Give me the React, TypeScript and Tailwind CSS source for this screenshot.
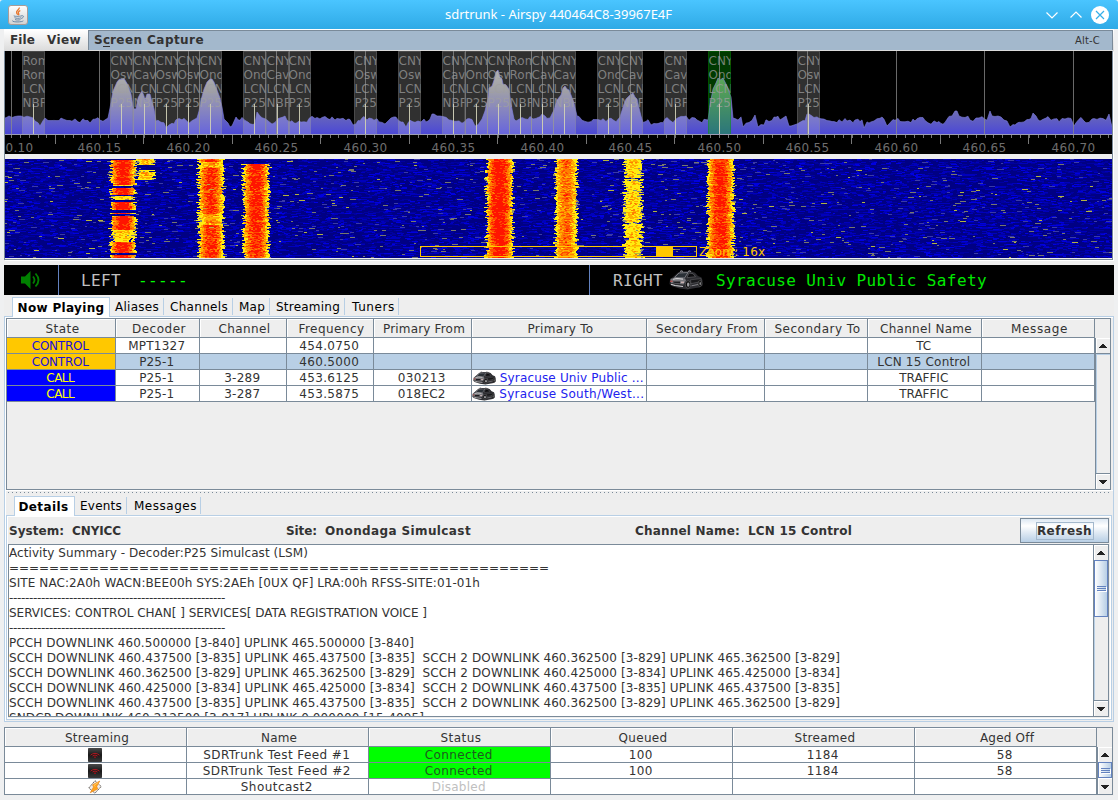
import { useLayoutEffect, useRef, useState, type ReactNode } from "react";

/* Text run whose tracking is adjusted so that it spans a fixed number of pixels. */
function T({ w, className = "", children }: { w?: number; className?: string; children: string }) {
  const ref = useRef<HTMLSpanElement>(null);
  const [ls, setLs] = useState(0);
  useLayoutEffect(() => {
    if (ref.current && w) {
      ref.current.style.letterSpacing = "0px";
      const gap = (w - ref.current.getBoundingClientRect().width) / children.length;
      ref.current.style.letterSpacing = gap + "px";
      setLs(gap);
    }
  }, [w, children]);
  return (
    <span ref={ref} className={"inline-block whitespace-pre " + className} style={{ letterSpacing: ls }}>
      {children}
    </span>
  );
}

function rng(seed: number) {
  let s = seed;
  return () => {
    s = (s * 1664525 + 1013904223) % 4294967296;
    return s / 4294967296;
  };
}

/* ---------- spectrum ---------- */
const CHANNELS: [number, string, string, string][] = [
  [22, "Rom", "Rom", "NBF"], [110, "CNY", "Osw", "P25"], [133, "CNY", "Cav", "NBF"], [155, "CNY", "Osw", "P25"],
  [177, "CNY", "Osw", "P25"], [199, "CNY", "Ono", "P25"], [243, "CNY", "Ono", "P25"], [266, "CNY", "Cav", "NBF"],
  [288, "CNY", "Ono", "P25"], [354, "CNY", "Osw", "P25"], [398, "CNY", "Osw", "P25"], [442, "CNY", "Cav", "NBF"],
  [465, "CNY", "Ono", "P25"], [487, "CNY", "Osw", "P25"], [509, "Rom", "Rom", "NBF"], [531, "CNY", "Cav", "NBF"],
  [553, "CNY", "Cav", "NBF"], [597, "CNY", "Ono", "P25"], [620, "CNY", "Cav", "NBF"], [664, "CNY", "Cav", "NBF"],
  [708, "CNY", "Ono", "P25"], [797, "CNY", "Osw", "P25"],
];

const PEAKS: [number, number][][] = [
  [[108, 118], [110, 108], [113, 91], [117, 82], [119, 79.5], [122, 79], [123, 79], [124, 78.5], [125, 80], [128, 85], [131, 94], [133, 106], [134, 109], [136, 109], [138, 98], [140, 94], [142, 91], [144, 96], [145, 100], [147, 94], [150, 94], [152, 102], [154, 109], [156, 121]],
  [[197, 118], [199, 111], [201, 100], [204, 89], [207, 82], [210, 79], [212, 79], [214, 82], [217, 90], [220, 98], [222, 107], [224, 119], [228, 123], [230, 127], [232, 126], [236, 117]],
  [[482, 119], [485, 111], [488, 98], [489, 88], [492, 86], [494, 80], [496, 72], [498, 70], [500, 77], [502, 79], [503, 84], [506, 85], [509, 89], [511, 104], [514, 119]],
  [[550, 118], [554, 110], [557, 100], [561, 95], [563, 88], [565, 86], [567, 89], [569, 90], [571, 95], [574, 103], [577, 116]],
  [[620, 117], [624, 104], [626, 99], [630, 95], [633, 93], [635, 97], [637, 99], [639, 108], [641, 116]],
  [[708, 120], [710, 105], [713, 89], [716, 83], [718, 78], [720, 80], [723, 78], [726, 84], [728, 89], [731, 97], [733, 118]],
];
const BUMPS: [number, number][] = [[433, 114], [542, 114], [257, 112], [956, 111], [990, 111], [1034, 113], [755, 115], [808, 114], [1109, 114], [9, 116]];
const DIPS: [number, number][] = [[40, 126], [167, 128], [352, 125], [405, 127], [476, 126], [650, 125], [744, 127], [757, 127], [790, 126], [865, 128], [887, 126], [1011, 127], [1073, 126]];

function tracePath() {
  const r = rng(77);
  const pts: [number, number][] = [[5, 118]];
  let x = 7;
  let y = 118;
  while (x < 1111) {
    const pk = PEAKS.find((p) => x >= p[0][0] - 2 && x <= p[p.length - 1][0]);
    if (pk) {
      pts.push(...pk);
      x = pk[pk.length - 1][0] + 2;
      continue;
    }
    const b = BUMPS.find((q) => Math.abs(q[0] - x) < 1.6) || DIPS.find((q) => Math.abs(q[0] - x) < 1.6);
    y = b ? b[1] : Math.max(116, Math.min(125, y * 0.6 + 119.5 * 0.4 + (r() - 0.5) * 6));
    pts.push([x, y]);
    x += 2 + Math.round(r());
  }
  pts.push([1112, 127]);
  return pts.map((p) => p[0] + " " + p[1].toFixed(1)).join("L");
}
const TRACE = tracePath();

function Spectrum() {
  const lines = Array.from({ length: 13 }, (_, i) => Math.round(10.6 + i * 88.5) + 0.5);
  const ticks = Array.from({ length: 125 }, (_, i) => i);
  return (
    <svg width="1107" height="103" viewBox="5 51 1107 103" className="block bg-black" fontFamily="DejaVu Sans, sans-serif" fontSize="12">
      <defs>
        <linearGradient id="pw" gradientUnits="userSpaceOnUse" x1="0" y1="70" x2="0" y2="134">
          <stop offset="0" stopColor="#a4a4a4" />
          <stop offset="0.3" stopColor="#909095" />
          <stop offset="1" stopColor="#4b48d6" />
        </linearGradient>
        <clipPath id="under"><path d={"M5 134L" + TRACE + "L1112 134Z"} /></clipPath>
      </defs>
      {CHANNELS.map((c) => (
        <rect key={c[0]} x={c[0]} y="51" width="23" height="83" fill={c[0] === 708 ? "#003a00" : "#303030"} />
      ))}
      <path d={"M5 134L" + TRACE + "L1112 134Z"} fill="url(#pw)" />
      <g clipPath="url(#under)">
        {CHANNELS.map((c) => (
          <rect key={c[0]} x={c[0]} y="51" width="23" height="83" fill={c[0] === 708 ? "#00b400" : "#ffffff"} opacity={c[0] === 708 ? 0.42 : 0.16} />
        ))}
      </g>
      <path d={"M" + TRACE} fill="none" stroke="#7f7fe0" strokeWidth="1" opacity="0.6" />
      {CHANNELS.map((c) => (
        <path key={c[0]} d={`M${c[0] + 0.5} 134V51.5H${c[0] + 22.5}V134`} fill="none" stroke={c[0] === 708 ? "#008a00" : "#888"} opacity="0.3" />
      ))}
      {CHANNELS.slice(0, 21).filter((c, i) => CHANNELS[i + 1][0] - c[0] < 24).map((c) => (
        <path key={c[0]} d={`M${c[0] + 22.5 + (c[0] % 2 ? 0 : 1)} 51V134`} stroke="#999" opacity="0.5" />
      ))}
      {lines.map((x) => (
        <path key={x} d={`M${x} 51V134`} stroke="#8c8c8c" opacity="0.75" />
      ))}
      {CHANNELS.map((c) => (
        <svg key={c[0]} x={c[0]} y="51" width="22.5" height="83" fill="#a0a0a0" fillOpacity="0.72">
          <text x="0.5" y="14">{c[1]}</text>
          <text x="0.5" y="28">{c[2]}</text>
          <text x="0.5" y="42">LCN</text>
          <text x="0.5" y="56">{c[3]}</text>
        </svg>
      ))}
      {CHANNELS.map((c) => (
        <path key={c[0]} d={`M${c[0] + 11.5} 104V134`} stroke="#d2d2b8" opacity="0.9" />
      ))}
      <path d="M5 134.5H1112" stroke="#9c9cb4" />
      {ticks.map((i) => {
        const x = Math.round(11 + i * 8.85) + 0.5;
        return <path key={i} d={`M${x} 135V138`} stroke="#777" />;
      })}
      {lines.map((x) => (
        <path key={x} d={`M${x + 44} 135V144`} stroke="#777" />
      ))}
      <g fill="#6e6e6e" textAnchor="middle">
        {lines.map((x, i) => (
          <text key={x} x={x} y="152" letterSpacing="0.35">{i ? (460.1 + i * 0.05).toFixed(2) : "460.10"}</text>
        ))}
      </g>
    </svg>
  );
}

/* ---------- waterfall ---------- */
type Band = { c: number; h: number; heat: (y: number) => number };
const inR = (y: number, rs: number[][]) => rs.some((q) => y >= q[0] && y <= q[1]);
const BANDS: Band[] = [
  { c: 123, h: 12.5, heat: (y) => (inR(y, [[1, 25], [29, 35], [43, 50], [54, 54], [57, 70], [83, 93], [96, 98]]) ? 0.96 : inR(y, [[26, 26], [37, 40], [71, 82]]) ? 0.4 : 0) },
  { c: 146, h: 9, heat: (y) => (inR(y, [[0, 5], [13, 19]]) ? 0.5 : inR(y, [[11, 12], [20, 20]]) ? 0.3 : 0) },
  { c: 211, h: 12.5, heat: (y) => (inR(y, [[3, 8], [55, 65]]) ? 0.6 : 0.86) },
  { c: 256, h: 12.5, heat: (y) => (y < 5 ? 0 : 0.88) },
  { c: 499.5, h: 13, heat: () => 0.96 },
  { c: 566, h: 11, heat: () => 0.68 },
  { c: 633, h: 9.5, heat: (y) => (inR(y, [[19, 21], [31, 32], [63, 65], [79, 80]]) ? 0.24 : 0.43) },
  { c: 720.5, h: 13, heat: () => 0.88 },
];
function waterfall() {
  const r = rng(4242);
  const out: Record<string, string> = {};
  const put = (k: string, x: number, y: number, w: number) => {
    out[k] = (out[k] || "") + `M${x} ${y}h${w}v1h-${w}z`;
  };
  for (let y = 0; y < 99; y++) {
    let x = 5;
    while (x < 1112) {
      const w = 2 + Math.floor(r() * 5);
      const v = r();
      if (v > 0.985) put("#77776e", x, y, w);
      else if (v > 0.982) put("#b4b440", x, y, w);
      else if (v > 0.965) put("#3a3aa8", x, y, w);
      else if (v > 0.89) put("#0000e0", x, y, w);
      else if (v > 0.72) put("#0000bc", x, y, w);
      else if (v > 0.56) put("#0000a0", x, y, w);
      x += w;
    }
    for (const b of BANDS) {
      const heat = b.heat(y);
      if (!heat) continue;
      const left = b.c - b.h + (r() - 0.5) * 5;
      const right = b.c + b.h + (r() - 0.5) * 5;
      const row = (r() - 0.5) * 0.18;
      for (let px = left; px < right; px += 2) {
        const d = Math.abs(px + 1 - b.c) / b.h;
        const e = heat * (1.17 - d * d * 0.8) + (r() - 0.5) * 0.36 + row;
        const k = e > 0.97 ? "#ff1400" : e > 0.82 ? "#ff4a00" : e > 0.66 ? "#ff7e00" : e > 0.5 ? "#ffae00" : e > 0.22 ? "#ffec10" : e > 0.14 ? "#8a8a70" : "";
        if (k) put(k, Math.round(px), y, 2);
      }
    }
  }
  return Object.entries(out);
}
const FALL = waterfall();

function Waterfall() {
  return (
    <svg width="1107" height="99" viewBox="5 0 1107 99" className="block bg-[#000084]">
      <g shapeRendering="crispEdges">
        {FALL.map(([k, d]) => (
          <path key={k} d={d} fill={k} />
        ))}
      </g>
      <rect x="420.5" y="87.5" width="276" height="10" fill="none" stroke="#ffc800" />
      <rect x="656" y="87" width="17" height="11" fill="#ffc800" />
      <text x="699" y="97" fill="#ffc800" fontSize="12" fontFamily="DejaVu Sans, sans-serif" letterSpacing="0.15">Zoom: 16x</text>
    </svg>
  );
}

/* ---------- icons ---------- */
function JavaIcon() {
  return (
    <svg width="20" height="20" viewBox="0 0 20 20">
      <defs>
        <linearGradient id="jv" x1="0" y1="0" x2="0" y2="1"><stop offset="0" stopColor="#fff" /><stop offset="1" stopColor="#d2d2d2" /></linearGradient>
      </defs>
      <rect x="0.5" y="0.5" width="19" height="19" rx="2.5" fill="url(#jv)" stroke="#a89c98" />
      <path d="M11.2 2.5c.8 2-3.4 3.2-2.6 5.300.3.8 1 1.400 1.300 2M12.300 5.500c-1.700 1-2.500 1.800-1.700 2.900.5.7.4 1.200-.2 1.800" fill="none" stroke="#e8762d" strokeWidth="1.300" />
      <path d="M6 10.700c-1.500.8 6 .9 8 0M6.500 12.700c1.500.8 5 .8 6.500.1M7 14.500c1.400.7 4 .7 5.500.1M13.700 10.800c2.600-.6 2.300 2-.6 2.700M4.500 15.700c-.8 1.500 9.500 1.700 10.800.1" fill="none" stroke="#5f7f9f" strokeWidth="0.900" />
    </svg>
  );
}

function Car({ small = false }: { small?: boolean }) {
  return (
    <svg width={small ? 23 : 34} height={small ? 14 : 20} viewBox="0 0 34 20" className="shrink-0">
      <path d="M1 9.500 4 7 9 2.500 12 1.200h10l4 1.500L29 6l3.500 1.500 1 3v5l-3 2-4 .5-8 1.500-8-1-8-2.500L.5 14z" fill="#2c2c30" />
      <path d="M11 1.500q1.500-1.500 3 0M19 1.500q1.500-1.500 3 0" stroke="#94949a" strokeWidth="1" fill="#777" />
      <path d="M5.500 7.500 10 3l9-.5-3.500 5.500z" fill="#2a3036" stroke="#8a8a90" strokeWidth="0.800" />
      <path d="M20 3l4 .7 2.500 3-8.500 1z" fill="#0c0c0e" stroke="#69696d" strokeWidth="0.600" />
      <path d="M1.500 8.800 8 7.700l8 .8 1 2-2.500 4L2 13z" fill="#77777c" />
      <path d="M4 9.300 8 8.500l6 .6M2 14.200l4 1.300 8 1" stroke="#d2d2d4" strokeWidth="1.100" fill="none" />
      <path d="M4 11.500h7v2l-6.500-.7z" fill="#1c1c1f" />
      <path d="M1.200 11.300h2.400" stroke="#b05050" strokeWidth="1.500" />
      <path d="M12 12.300h3" stroke="#c8b0b0" strokeWidth="1.500" />
      <path d="M21.500 9.800 32 8.600v3l-10 2z" fill="#18181a" stroke="#66666a" strokeWidth="0.500" />
      <path d="M22.500 15.800 29 14.500" stroke="#8d8d92" strokeWidth="0.900" />
      <ellipse cx="19" cy="14.500" rx="2.700" ry="3.900" fill="#0b0b0b" stroke="#707074" strokeWidth="0.600" />
      <ellipse cx="19.200" cy="14.700" rx="1.300" ry="2.100" fill="#9b9b9f" />
      <ellipse cx="31" cy="13.500" rx="1.900" ry="3" fill="#0b0b0b" stroke="#666" strokeWidth="0.600" />
      <ellipse cx="31.200" cy="13.500" rx="0.800" ry="1.500" fill="#8b8b8f" />
    </svg>
  );
}

function FeedIcon() {
  return (
    <svg width="14" height="14" viewBox="0 0 14 14" className="block">
      <defs>
        <linearGradient id="fd" x1="0" y1="0" x2="0" y2="1"><stop offset="0" stopColor="#4a4a4a" /><stop offset="0.5" stopColor="#181818" /><stop offset="1" stopColor="#3a3a3a" /></linearGradient>
      </defs>
      <rect width="14" height="14" rx="0.800" fill="url(#fd)" />
      <path d="M2.500 7.200Q7 3.500 11.500 7.200M4.500 8Q7 6 9.500 8" fill="none" stroke="#b01820" strokeWidth="1" />
      <path d="M7 7.500v1.800M6 9.500h2" stroke="#901018" strokeWidth="0.900" />
    </svg>
  );
}

function ShoutcastIcon() {
  return (
    <svg width="14" height="14" viewBox="0 0 14 14" className="block">
      <path d="M7 .7 13.200 6.500 7 13.200.8 8z" fill="#f1ede8" stroke="#6f6a66" strokeWidth="1" strokeDasharray="1.800 0.500" />
      <path d="M11.800 1 4.500 4.800 5.500 7l-3.300 5.800L9.800 9 8.800 6.500z" fill="#ffa31c" stroke="#e8821a" strokeWidth="0.600" />
      <path d="M10.200 2.500 6 5.300l1.200 1.300" fill="none" stroke="#ffd47a" strokeWidth="0.800" />
    </svg>
  );
}

function Arrow({ up = false }: { up?: boolean }) {
  return (
    <svg width="8" height="4" viewBox="0 0 8 4" shapeRendering="crispEdges" className="block">
      <path d={up ? "M3 0h2v1h1v1h1v1h1v1H0V3h1V2h1V1h1z" : "M0 0h8v1H7v1H6v1H5v1H3V3H2V2H1V1H0z"} fill="#222" />
    </svg>
  );
}

function Grip() {
  return (
    <div className="flex h-[5px] w-[9px] flex-col justify-between border-y border-[#6382bf] py-[1px] shadow-[1px_1px_0_#fff]">
      <div className="h-px bg-[#6382bf]" />
    </div>
  );
}

function ArrowBtn({ up = false, className = "" }: { up?: boolean; className?: string }) {
  return (
    <div className={"flex shrink-0 items-center justify-center border-l border-t border-white bg-[#eeeeee] pr-[2px] " + className}>
      <Arrow up={up} />
    </div>
  );
}

/* ---------- tables ---------- */
const LINE = "border-[#7a8a99]";

function Head({ w, children }: { w: number; children: string }) {
  return (
    <div className={"h-[19px] border-b border-r " + LINE}>
      <div className="flex h-[18px] items-center justify-center border-l border-t border-white bg-[#eeeeee] pl-[2px] pt-[2px]">
        <T w={w}>{children}</T>
      </div>
    </div>
  );
}

function Cell({ className = "bg-white", icon = false, children }: { className?: string; icon?: boolean; children?: ReactNode }) {
  return (
    <div className={"flex h-[16px] items-center justify-center overflow-hidden border-b border-r pr-[1.500px] leading-[15px] " + (icon ? "pt-0 " : "pt-[2px] ") + LINE + " " + className}>
      {children}
    </div>
  );
}

const HEADS: [string, number][] = [
  ["State", 34], ["Decoder", 54], ["Channel", 52], ["Frequency", 66], ["Primary From", 82],
  ["Primary To", 66], ["Secondary From", 102], ["Secondary To", 86], ["Channel Name", 92], ["Message", 57],
];

type Row = { state: string; dec: string; ch?: string; f: string; from?: string; to?: [string, number]; name: [string, number]; sel?: boolean };
const ROWS: Row[] = [
  { state: "CONTROL", dec: "MPT1327", f: "454.0750", name: ["TC", 15] },
  { state: "CONTROL", dec: "P25-1", f: "460.5000", name: ["LCN 15 Control", 93], sel: true },
  { state: "CALL", dec: "P25-1", ch: "3-289", f: "453.6125", from: "030213", to: ["Syracuse Univ Public ...", 144], name: ["TRAFFIC", 49] },
  { state: "CALL", dec: "P25-1", ch: "3-287", f: "453.5875", from: "018EC2", to: ["Syracuse South/West...", 145], name: ["TRAFFIC", 49] },
];

function NowPlayingTable() {
  return (
    <div className={"flex h-[172px] w-[1105px] border " + LINE}>
      <div className="w-[1088px]">
        <div className="grid grid-cols-[109px_84px_87px_87px_98px_175px_118px_103px_114px_113px]">
          {HEADS.map(([h, w]) => (
            <Head key={h} w={w}>{h}</Head>
          ))}
          {ROWS.map((r, i) => {
            const bg = r.sel ? "bg-[#b8cfe5]" : "bg-white";
            const ctl = r.state === "CONTROL";
            return (
              <div key={i} className="contents">
                <Cell className={ctl ? "bg-[#ffc800] text-[#1a10d8]" : "bg-[#0000ff] text-[#ffff00]"}>
                  <T w={ctl ? 57 : 28}>{r.state}</T>
                </Cell>
                <Cell className={bg}><T w={r.dec === "P25-1" ? 35 : 57}>{r.dec}</T></Cell>
                <Cell className={bg}>{r.ch && <T w={36}>{r.ch}</T>}</Cell>
                <Cell className={bg}><T w={60}>{r.f}</T></Cell>
                <Cell className={bg}>{r.from && <T w={48}>{r.from}</T>}</Cell>
                <Cell className={bg}>
                  {r.to && (
                    <div className="flex items-center gap-[4px] text-[#2222ee]">
                      <span className="pb-[2px]"><Car small /></span>
                      <T w={r.to[1]}>{r.to[0]}</T>
                    </div>
                  )}
                </Cell>
                <Cell className={bg} />
                <Cell className={bg} />
                <Cell className={bg}><T w={r.name[1]}>{r.name[0]}</T></Cell>
                <Cell className={bg} />
              </div>
            );
          })}
        </div>
      </div>
      <div className="flex w-[15px] flex-col pt-[19px]">
        <div className={"flex flex-1 flex-col border-l " + LINE}>
          <ArrowBtn up className="h-[15px]" />
          <div className="h-px bg-[#7a8a99]" />
          <div className="h-px bg-[#b8cfe5]" />
          <div className="flex-1 border-l border-[#b8cfe5] bg-[#eeeeee]" />
          <div className="h-px bg-[#7a8a99]" />
          <ArrowBtn className="h-[15px]" />
        </div>
      </div>
    </div>
  );
}

const FEEDS: [ReactNode, string, number, string, string, string][] = [
  [<FeedIcon />, "SDRTrunk Test Feed #1", 147, "Connected", "1184", "58"],
  [<FeedIcon />, "SDRTrunk Test Feed #2", 148, "Connected", "1184", "58"],
  [<ShoutcastIcon />, "Shoutcast2", 72, "Disabled", "", ""],
];

function StreamTable() {
  const heads: [string, number][] = [["Streaming", 64], ["Name", 36], ["Status", 41], ["Queued", 49], ["Streamed", 61], ["Aged Off", 54]];
  return (
    <div className={"flex h-[68px] w-[1109px] border border-b-0 " + LINE}>
      <div className="grid grid-cols-[182px_182px_182px_182px_182px_182px] content-start">
        {heads.map(([h, w]) => (
          <Head key={h} w={w}>{h}</Head>
        ))}
        {FEEDS.map(([icon, name, w, status, n, aged]) => (
          <div key={name} className="contents">
            <Cell icon>{icon}</Cell>
            <Cell><T w={w}>{name}</T></Cell>
            <Cell className={status === "Connected" ? "bg-[#00ff00] text-[#1f5a1f]" : "bg-white text-[#c0c0c0]"}>
              <T w={status === "Connected" ? 68 : 54}>{status}</T>
            </Cell>
            <Cell>{n && <T w={24}>100</T>}</Cell>
            <Cell>{n && <T w={32}>{n}</T>}</Cell>
            <Cell>{aged && <T w={16}>{aged}</T>}</Cell>
          </div>
        ))}
      </div>
      <div className={"mt-[19px] flex w-[15px] flex-col border-b border-l " + LINE}>
        <ArrowBtn up className="h-[15px]" />
        <div className="flex h-[16px] items-center justify-center border border-[#6382bf] bg-linear-to-r from-white to-[#b8cfe5]">
          <Grip />
        </div>
        <ArrowBtn className="h-[16px]" />
      </div>
    </div>
  );
}

/* ---------- tabs ---------- */
function Tabs({ first, firstClass, items, className }: { first: [string, number]; firstClass: string; items: [string, number, string][]; className: string }) {
  return (
    <div className={"flex items-end text-black " + className}>
      <div className={"z-10 -mb-px flex items-center justify-center border border-b-0 border-[#b8cfe5] bg-white pt-px font-bold " + firstClass}>
        <T w={first[1]}>{first[0]}</T>
      </div>
      {items.map(([t, w, c]) => (
        <div key={t} className={"mb-px flex h-[17px] items-center justify-end border-r border-[#b8cfe5] pt-[2px] " + c}>
          <T w={w}>{t}</T>
        </div>
      ))}
    </div>
  );
}

const LOG: [string, number][] = [
  ["Activity Summary - Decoder:P25 Simulcast (LSM)", 299],
  ["======================================================", 540],
  ["SITE NAC:2A0h WACN:BEE00h SYS:2AEh [0UX QF] LRA:00h RFSS-SITE:01-01h", 471],
  ["------------------------------------------------------", 216],
  ["SERVICES: CONTROL CHAN[ ] SERVICES[ DATA REGISTRATION VOICE ]", 418],
  ["------------------------------------------------------", 216],
  ["PCCH DOWNLINK 460.500000 [3-840] UPLINK 465.500000 [3-840]", 405],
  ["SCCH DOWNLINK 460.437500 [3-835] UPLINK 465.437500 [3-835]  SCCH 2 DOWNLINK 460.362500 [3-829] UPLINK 465.362500 [3-829]", 831],
  ["SCCH DOWNLINK 460.362500 [3-829] UPLINK 465.362500 [3-829]  SCCH 2 DOWNLINK 460.425000 [3-834] UPLINK 465.425000 [3-834]", 831],
  ["SCCH DOWNLINK 460.425000 [3-834] UPLINK 465.425000 [3-834]  SCCH 2 DOWNLINK 460.437500 [3-835] UPLINK 465.437500 [3-835]", 831],
  ["SCCH DOWNLINK 460.437500 [3-835] UPLINK 465.437500 [3-835]  SCCH 2 DOWNLINK 460.362500 [3-829] UPLINK 465.362500 [3-829]", 831],
  ["SNDCP DOWNLINK 460.212500 [3-817] UPLINK 0.000000 [15-4095]", 415],
];

export default function App() {
  return (
    <div className="h-[800px] w-[1118px] overflow-hidden bg-[#eff0f1] font-['DejaVu_Sans',sans-serif] text-[12px] leading-[15px] text-[#333333]">
      {/* title bar */}
      <div className="grid h-[29px] grid-cols-[1fr_auto_1fr] items-center rounded-t-[3px] bg-linear-to-b from-[#4ac5ff] to-[#2eaae6] pl-2 pr-[9px]">
        <JavaIcon />
        <T w={227} className="font-['Noto_Sans',sans-serif] text-[13px] text-white">sdrtrunk - Airspy 440464C8-39967E4F</T>
        <svg width="66" height="18" viewBox="0 0 66 18" className="justify-self-end" fill="none" stroke="#fff" strokeWidth="1.200">
          <path d="M3.500 6.500 9 12l5.500-5.500M27.500 11.500 33 6l5.500 5.500" />
          <circle cx="57" cy="9" r="9" fill="#fff" stroke="none" />
          <path d="m53 5 8 8m0-8-8 8" stroke="#35afe9" />
        </svg>
      </div>

      <div className="mx-[4px] bg-[#eeeeee]">
        {/* menu bar */}
        <div className="flex h-[22px] border-t border-white bg-linear-to-b from-white to-[#dadada] font-bold">
          <div className="flex w-[84px] items-center pb-px pl-[6px]">
            <T w={25}>File</T>
            <T w={34} className="ml-[12px]">View</T>
          </div>
          <div className="flex h-[20px] w-[1025px] items-center justify-between border border-b-0 border-[#7a8a99] bg-[#a3b8cc] pl-[5px] pr-[12px]">
            <span className="flex">
              <T w={9}>S</T>
              <T w={7} className="underline underline-offset-2">c</T>
              <T w={94}>reen Capture</T>
            </span>
            <T w={25} className="text-[10px] font-normal">Alt-C</T>
          </div>
        </div>

        {/* spectrum and waterfall */}
        <div className="h-[209px] w-[1109px] border-x border-b border-[#7a8a99] shadow-[1px_1px_0_#fff]">
          <Spectrum />
          <div className="h-[5px] bg-[#eeeeee]" />
          <Waterfall />
        </div>

        {/* audio channels */}
        <div className="mt-[5px] flex h-[30px] items-center bg-black font-['DejaVu_Sans_Mono',monospace] text-[16px] text-[#c0c0c0]">
          <div className="flex h-full w-[55px] items-center border-r border-[#6382bf] pl-[16px]">
            <svg width="22" height="20" viewBox="0 0 22 20" fill="none" stroke="#008000" strokeWidth="1.800">
              <path d="M1 6.500h4L10.500 1v18L5 13.500H1z" fill="#008000" stroke="none" />
              <path d="M13 6.500q3 3.500 0 7M15.500 3.500q6 6.500 0 13" />
            </svg>
          </div>
          <div className="flex h-full w-[531px] items-center border-r border-[#6382bf] pl-[22px]">
            <T w={40}>LEFT</T>
            <T w={50} className="ml-[17px] text-[#00ff00]">-----</T>
          </div>
          <div className="flex items-center pl-[23px]">
            <T w={50}>RIGHT</T>
            <span className="ml-[6px]"><Car /></span>
            <T w={271} className="ml-[13px] text-[#00e800]">Syracuse Univ Public Safety</T>
          </div>
        </div>

        {/* main tabs */}
        <Tabs
          className="h-[21px] pl-[8px]"
          first={["Now Playing", 87]}
          firstClass="h-[20px] w-[98px]"
          items={[
            ["Aliases", 44, "w-[54px] pr-[4px]"], ["Channels", 58, "w-[69px] pr-[4px]"], ["Map", 26, "w-[37px] pr-[4px]"],
            ["Streaming", 64, "w-[75px] pr-[4px]"], ["Tuners", 43, "w-[54px] pr-[3px]"],
          ]}
        />
        <div className="h-[406px] w-[1110px] border border-[#b8cfe5] pl-px pt-px shadow-[inset_1px_1px_0_#fff]">
          <NowPlayingTable />
          <div className="h-px bg-white" />
          <div className="mx-[2px] mt-px h-px bg-[repeating-linear-gradient(90deg,#7a8a99_0_1px,transparent_1px_4px)]" />

          <Tabs
            className="mt-[1px] h-[21px] pl-[8px]"
            first={["Details", 50]}
            firstClass="h-[20px] w-[61px] pr-[2px]"
            items={[["Events", 42, "w-[52px] pr-[4px]"], ["Messages", 63, "w-[74px] pr-[3px]"]]}
          />
          <div className="h-[205px] w-[1106px] border border-[#b8cfe5] pl-px pt-px shadow-[inset_1px_1px_0_#fff,inset_-1px_-1px_0_#fff]">
            <div className="grid h-[27px] grid-cols-[277px_349px_385px_1fr] items-center pl-px font-bold">
              <span className="pt-[2px]"><T w={55}>System:</T><T w={49} className="ml-[8px]">CNYICC</T></span>
              <span className="pt-[2px]"><T w={31}>Site:</T><T w={146} className="ml-[8px]">Onondaga Simulcast</T></span>
              <span className="pt-[2px]"><T w={105}>Channel Name:</T><T w={104} className="ml-[8px]">LCN 15 Control</T></span>
              <button className="flex h-[25px] w-[89px] items-center justify-center border border-[#7a8a99] bg-[linear-gradient(#dde8f3,#ffffff_30%,#dfe9f3_60%,#b8cfe5)]">
                <span className="flex h-[18px] w-[58px] items-center justify-center border border-[#a3b8cc] pt-px">
                  <T w={55}>Refresh</T>
                </span>
              </button>
            </div>
            <div className={"flex h-[173px] w-[1101px] border bg-white " + LINE}>
              <div className="w-[1084px] overflow-hidden pt-px">
                {LOG.map(([t, w], i) => (
                  <div key={i} className="h-[15px]"><T w={w}>{t}</T></div>
                ))}
              </div>
              <div className={"flex w-[15px] flex-col border-l bg-[#eeeeee] " + LINE}>
                <ArrowBtn up className="h-[15px]" />
                <div className="flex h-[57px] items-center justify-center border border-[#6382bf] bg-linear-to-r from-white to-[#b8cfe5]">
                  <Grip />
                </div>
                <div className="flex-1 border-l border-[#b8cfe5]" />
                <div className="h-px bg-[#7a8a99]" />
                <ArrowBtn className="h-[15px]" />
              </div>
            </div>
          </div>
        </div>

        {/* streaming status */}
        <div className="pb-px pt-[5px]">
          <StreamTable />
        </div>
      </div>
    </div>
  );
}
